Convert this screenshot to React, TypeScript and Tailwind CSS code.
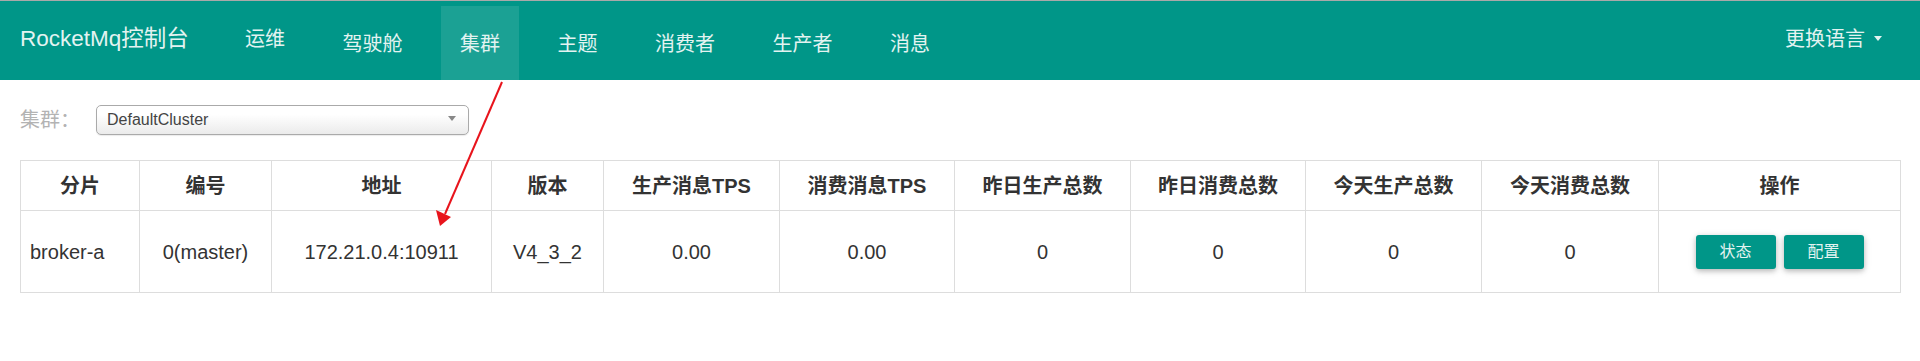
import { FC } from 'react';

const NAV_ITEMS = ['运维', '驾驶舱', '集群', '主题', '消费者', '生产者', '消息'];

const COLUMNS: { title: string; width: string }[] = [
  { title: '分片', width: 'w-[119px]' },
  { title: '编号', width: 'w-[132px]' },
  { title: '地址', width: 'w-[220px]' },
  { title: '版本', width: 'w-[112px]' },
  { title: '生产消息TPS', width: 'w-[176px]' },
  { title: '消费消息TPS', width: 'w-[175px]' },
  { title: '昨日生产总数', width: 'w-[176px]' },
  { title: '昨日消费总数', width: 'w-[175px]' },
  { title: '今天生产总数', width: 'w-[176px]' },
  { title: '今天消费总数', width: 'w-[177px]' },
  { title: '操作', width: 'w-[242px]' },
];

const ROW = ['broker-a', '0(master)', '172.21.0.4:10911', 'V4_3_2', '0.00', '0.00', '0', '0', '0', '0'];

const FONT = "font-['Liberation_Sans','Noto_Sans_CJK_SC',sans-serif]";

const NavBar: FC = () => (
  <div className="flex h-[80px] bg-[#009688] border-t border-[#a9a9a9] text-[#e3f3f1]">
    <div className="w-[226px] pl-[20px] flex items-center pb-[2px] text-[22.5px] leading-none">
      RocketMq控制台
    </div>
    <ul className="flex gap-[19.5px]">
      {NAV_ITEMS.map((item, i) => (
        <li
          key={item}
          className={
            'mt-[5px] h-[74px] px-[19px] flex items-center text-[20px] leading-none ' +
            (i === 0 ? 'pb-[8px] ' : 'pt-[1px] ') +
            (item === '集群' ? 'bg-[#1ba194]' : '')
          }
        >
          {item}
        </li>
      ))}
    </ul>
    <div className="ml-auto pr-[38px] flex items-center gap-[9px] pb-[4px] text-[20px] leading-none">
      <span>更换语言</span>
      <span className="w-0 h-0 border-l-[4.5px] border-r-[4.5px] border-t-[5px] border-l-transparent border-r-transparent border-t-[#e3f3f1]" />
    </div>
  </div>
);

const ClusterSelect: FC = () => (
  <div className="flex items-center h-[30px] mt-[25px] px-[20px]">
    <div className="w-[76px] text-[20px] leading-none text-[#b3b3b3]">集群：</div>
    <div className="w-[373px] h-[30px] rounded-[5px] border border-[#aaaaaa] bg-gradient-to-b from-white from-30% to-[#ebebeb] flex items-center pl-[10px] pr-[12px] shadow-[0_1px_1px_rgba(0,0,0,0.08)]">
      <span className="text-[16px] text-[#444] leading-none">DefaultCluster</span>
      <span className="ml-auto mb-[3px] w-0 h-0 border-l-[4px] border-r-[4px] border-t-[5px] border-l-transparent border-r-transparent border-t-[#888]" />
    </div>
  </div>
);

const BrokerTable: FC = () => (
  <div className="px-[20px] mt-[25px]">
    <table className="table-fixed border-collapse w-[1880px] text-[#333]">
      <thead>
        <tr className="h-[50px]">
          {COLUMNS.map((c) => (
            <th key={c.title} className={`${c.width} border border-[#dddddd] text-center text-[20px] font-bold leading-none`}>
              {c.title}
            </th>
          ))}
        </tr>
      </thead>
      <tbody>
        <tr className="h-[82px]">
          {ROW.map((v, i) => (
            <td
              key={i}
              className={`border border-[#dddddd] text-[20px] leading-none ${i === 0 ? 'text-left pl-[9px]' : 'text-center'}`}
            >
              {v}
            </td>
          ))}
          <td className="border border-[#dddddd]">
            <div className="flex justify-center gap-[8px]">
              {['状态', '配置'].map((b) => (
                <button
                  key={b}
                  className="w-[80px] h-[34px] rounded-[3px] bg-[#009688] text-[#e3f3f1] text-[16px] leading-none shadow-[0_2px_5px_rgba(0,0,0,0.2),0_2px_8px_rgba(0,0,0,0.12)]"
                >
                  {b}
                </button>
              ))}
            </div>
          </td>
        </tr>
      </tbody>
    </table>
  </div>
);

const Arrow: FC = () => (
  <svg className="absolute left-0 top-0 pointer-events-none" width="1920" height="361">
    <line x1="502" y1="82" x2="445" y2="214" stroke="#e8141c" strokeWidth="2" />
    <polygon points="440,226 436,210 451,217" fill="#e8141c" />
  </svg>
);

export default function App() {
  return (
    <div className={`relative w-[1920px] h-[361px] bg-white overflow-hidden ${FONT}`}>
      <NavBar />
      <ClusterSelect />
      <BrokerTable />
      <Arrow />
    </div>
  );
}
